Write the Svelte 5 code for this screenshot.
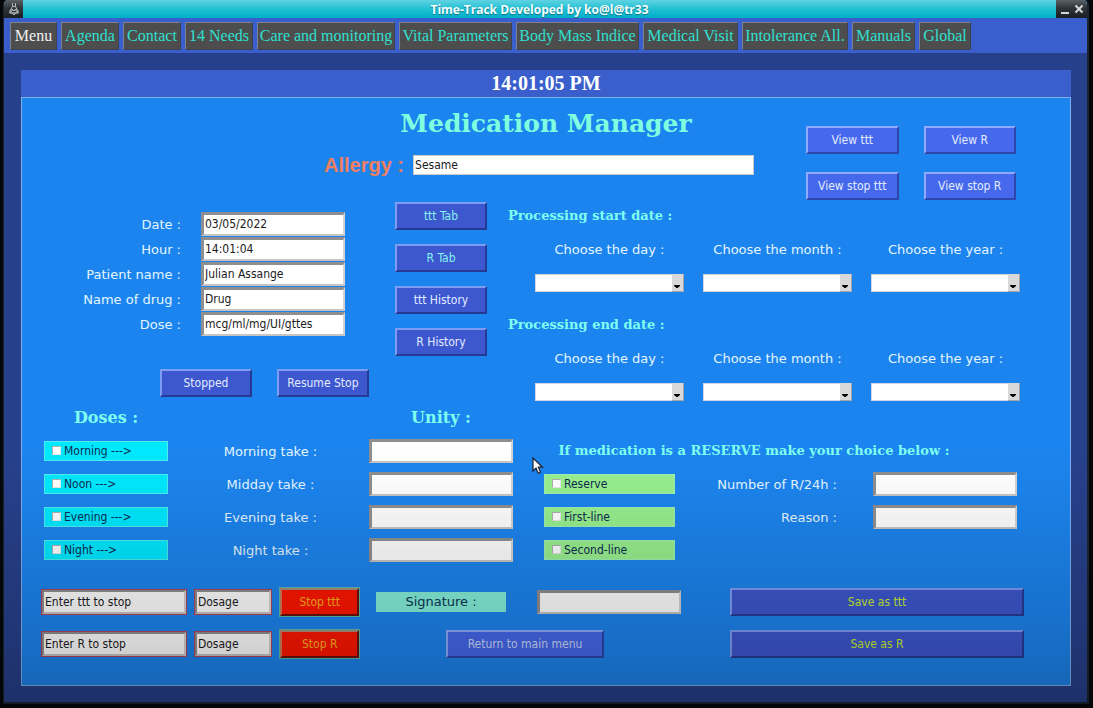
<script>
  const menu = [
    'Menu', 'Agenda', 'Contact', '14 Needs', 'Care and monitoring', 'Vital Parameters',
    'Body Mass Indice', 'Medical Visit', 'Intolerance All.', 'Manuals', 'Global'
  ];
  const views = ['View ttt', 'View R', 'View stop ttt', 'View stop R'];
  const fields = [
    { id: 'date', label: 'Date :', value: '03/05/2022' },
    { id: 'hour', label: 'Hour :', value: '14:01:04' },
    { id: 'patient', label: 'Patient name :', value: 'Julian Assange' },
    { id: 'drug', label: 'Name of drug :', value: 'Drug' },
    { id: 'dose', label: 'Dose :', value: 'mcg/ml/mg/UI/gttes' }
  ];
  const tabs = [
    { text: 'ttt Tab', aqua: true },
    { text: 'R Tab', aqua: true },
    { text: 'ttt History', aqua: false },
    { text: 'R History', aqua: false }
  ];
  const periods = ['start', 'end'];
  const units = ['day', 'month', 'year'];
  const takes = [
    { dose: 'Morning --->', label: 'Morning take :', line: '', extra: '' },
    { dose: 'Noon --->', label: 'Midday take :', line: 'Reserve', extra: 'Number of R/24h :' },
    { dose: 'Evening --->', label: 'Evening take :', line: 'First-line', extra: 'Reason :' },
    { dose: 'Night --->', label: 'Night take :', line: 'Second-line', extra: '' }
  ];
  const stops = ['ttt', 'R'];
</script>

<div class="screen">
  <div class="window">
    <header class="titlebar">
      <div class="badge">
        <svg width="14" height="14" viewBox="0 0 14 14" fill="none" stroke="#b4b8ba" aria-hidden="true">
          <path d="M5.500 1v3.500L4.200 7M8.500 1v3.500L9.800 7M5.500 4.500h3" />
          <path d="M4.200 7C3.200 8 2.600 9.400 2.600 11L5 11.200l2 1.600 2-1.600 2.400-.2C11.400 9.400 10.800 8 9.800 7L7 8.400z" fill="#8b9093" />
          <path d="M5 9.500h4" stroke="#33383b" />
        </svg>
      </div>
      <h1>Time-Track Developed by ko@l@tr33</h1>
      <div class="winbuttons">
        <button aria-label="Minimize">
          <svg width="10" height="12" viewBox="0 0 10 12"><path d="M1 10h8" stroke="#d4d8da" stroke-width="2" /></svg>
        </button>
        <button aria-label="Close">
          <svg width="10" height="12" viewBox="0 0 10 12"><path d="M1.500 2.500l7 7M8.500 2.500l-7 7" stroke="#d4d8da" stroke-width="2" /></svg>
        </button>
      </div>
    </header>

    <nav class="menubar">
      {#each menu as item, i}
        <button class:first={i === 0}>{item}</button>
      {/each}
    </nav>

    <main>
      <div class="clock">14:01:05 PM</div>

      <div class="panel">
        <section class="top">
          <div class="heading">
            <h2>Medication Manager</h2>
            <div class="allergy">
              <label for="allergy">Allergy :</label>
              <input id="allergy" value="Sesame" />
            </div>
          </div>
          <div class="views">
            {#each views as v}
              <button class="btn light">{v}</button>
            {/each}
          </div>
        </section>

        <section class="middle">
          <div class="patient">
            <div class="fields">
              {#each fields as f}
                <label for={f.id}>{f.label}</label>
                <input class="sunken" id={f.id} value={f.value} />
              {/each}
            </div>
            <div class="stopbuttons">
              <button class="btn">Stopped</button>
              <button class="btn">Resume Stop</button>
            </div>
          </div>

          <div class="tabs">
            {#each tabs as t}
              <button class="btn" class:aqua={t.aqua}>{t.text}</button>
            {/each}
          </div>

          <div class="periods">
            {#each periods as p}
              <div class="period">
                <h3>Processing {p} date :</h3>
                <div class="choices">
                  {#each units as u}
                    <div class="choice">
                      <label for="{p}-{u}">Choose the {u} :</label>
                      <div class="combo">
                        <select id="{p}-{u}"><option value=""></option></select>
                        <svg width="12" height="18" viewBox="0 0 12 18" aria-hidden="true">
                          <rect width="12" height="18" fill="#d9d9d9" />
                          <path d="M11.500 0v18M0 17.500h12" stroke="#a5a5a5" />
                          <path d="M2 11h6v1L5.500 14h-1L2 12z" fill="#000" />
                        </svg>
                      </div>
                    </div>
                  {/each}
                </div>
              </div>
            {/each}
          </div>
        </section>

        <section class="doses">
          <h3 class="h-doses">Doses :</h3>
          <h3 class="h-unity">Unity :</h3>
          {#each takes as t, i}
            <label class="check cyan">
              <input type="checkbox" /><span>{t.dose}</span>
            </label>
            <label class="take" for="take-{i}">{t.label}</label>
            <input class="sunken amount" id="take-{i}" />
            {#if i === 0}
              <h3 class="reserve">If medication is a RESERVE make your choice below :</h3>
            {:else}
              <label class="check green">
                <input type="checkbox" /><span>{t.line}</span>
              </label>
              {#if t.extra}
                <label class="extra" for="extra-{i}">{t.extra}</label>
                <input class="sunken extra-field" id="extra-{i}" />
              {/if}
            {/if}
          {/each}
        </section>

        <section class="bottom">
          <div class="stops">
            {#each stops as s}
              <input class="sunken red" aria-label="Treatment {s}" value="Enter {s} to stop" />
              <input class="sunken red" aria-label="Dosage {s}" value="Dosage" />
              <button class="btn stop">Stop {s}</button>
            {/each}
          </div>
          <div class="sign">
            <div class="signature">
              <label for="signature">Signature :</label>
              <input class="sunken" id="signature" />
            </div>
            <button class="btn light return">Return to main menu</button>
          </div>
          <div class="saves">
            <button class="btn save">Save as ttt</button>
            <button class="btn save">Save as R</button>
          </div>
        </section>
      </div>
    </main>
  </div>

  <svg class="pointer" width="12" height="18" viewBox="0 0 12 18" aria-hidden="true">
    <path d="M1 1v13l3-3 2.200 5.200 2.300-1L6.400 10.200H10.500z" fill="#fff" stroke="#1b2230" stroke-width="1.200" />
  </svg>
</div>

<style>
  :global(body) {
    margin: 0;
    background: #05080a;
  }

  .screen {
    position: relative;
    box-sizing: border-box;
    min-height: 100vh;
    display: flex;
    padding: 0 4px 4px 3px;
    background: #05080a;
    font-family: "DejaVu Sans", sans-serif;
    font-size: 13px;
  }

  .screen::after {
    content: "";
    position: absolute;
    inset: 0;
    pointer-events: none;
    background: linear-gradient(
      rgba(0, 0, 0, 0) 63%,
      rgba(0, 0, 0, 0.02) 68%,
      rgba(0, 0, 0, 0.09) 78%,
      rgba(0, 0, 0, 0.17) 91%,
      rgba(0, 0, 0, 0.26) 100%
    );
  }

  .window {
    flex: 1;
    min-width: 0;
    display: flex;
    flex-direction: column;
    border: solid #1b2532;
    border-width: 0 2px 2px 1px;
    border-radius: 5px 5px 0 0;
    overflow: hidden;
    background: #27408b;
  }

  .titlebar {
    display: flex;
    height: 18px;
    background: linear-gradient(#5fd3e2, #21c0d3 50%, #00b0c8);
  }

  .badge,
  .winbuttons {
    display: flex;
    align-items: center;
    justify-content: center;
    background: linear-gradient(#5a6065, #2f3439 45%, #1b1f23);
  }

  .badge {
    width: 19px;
  }

  .winbuttons {
    width: 31px;
    gap: 4px;
  }

  .winbuttons button {
    display: flex;
    padding: 0;
    border: 0;
    background: none;
  }

  h1 {
    flex: 1;
    margin: 0;
    text-align: center;
    font: bold 12px/20px "Open Sans", sans-serif;
    color: #f4ffff;
    text-shadow: 0 1px 1px #0b6f80;
  }

  .menubar {
    display: grid;
    grid-template-columns: 47fr 58fr 58fr 68fr 138fr 113fr 123fr 95fr 106fr 63fr 52fr 112fr;
    gap: 4px;
    padding: 4px 0 3px 6px;
    background: #3a5fcd;
  }

  .menubar button {
    height: 28px;
    padding: 0;
    border: 1px solid;
    border-color: #7d8194 #3c4250 #3c4250 #7d8194;
    background: #4d4d4d;
    color: #2fe0d0;
    font: 16px/24px "Liberation Serif", serif;
    white-space: nowrap;
  }

  .menubar .first {
    color: #f2f2f2;
  }

  main {
    padding: 17px 16px 16px 17px;
  }

  .clock {
    background: #3a5fcd;
    color: #fff;
    text-align: center;
    font: bold 20px/27px "Liberation Serif", serif;
  }

  .panel {
    border: 1px solid #7fb0ee;
    background: #1c84ee;
    padding-bottom: 27px;
  }

  h2 {
    margin: 0;
    padding-left: 14px;
    text-align: center;
    font: bold 25px/32px "DejaVu Serif", serif;
    color: #7fffe0;
    white-space: nowrap;
  }

  h3 {
    margin: 0;
    font: bold 13px/20px "DejaVu Serif", serif;
    color: #7ffff0;
    white-space: nowrap;
  }

  label {
    color: #e3f6ff;
    white-space: nowrap;
  }

  input,
  select {
    box-sizing: border-box;
    width: 100%;
    min-width: 0;
    margin: 0;
    border-radius: 0;
    background: #fff;
    color: #1a1a1a;
    font: 12px "DejaVu Sans Condensed", "DejaVu Sans", sans-serif;
  }

  .sunken {
    height: 24px;
    padding: 0 1px 1px;
    border: solid;
    border-width: 3px 2px 2px 3px;
    border-color: #8f8f8f #d6d2d0 #c8c4c2 #8f8f8f;
  }

  .btn {
    box-sizing: border-box;
    width: 100%;
    height: 28px;
    padding: 0 0 1px;
    border: 2px solid;
    border-color: #7f9cf5 #263a95 #263a95 #7f9cf5;
    background: #3d57cf;
    color: #e3ecff;
    font: 12px "DejaVu Sans Condensed", "DejaVu Sans", sans-serif;
    white-space: nowrap;
  }

  .light {
    background: #4568ec;
    border-color: #8fabff #2c46ab #2c46ab #8fabff;
  }

  .aqua {
    color: #86f3ee;
  }

  .top {
    display: grid;
    grid-template-columns: 302fr 430fr 52fr 210fr 54fr;
  }

  .heading {
    grid-column: 2;
    padding-top: 10px;
  }

  .allergy {
    display: flex;
    align-items: center;
    gap: 9px;
    padding-top: 15px;
  }

  .allergy label {
    font: bold 20px/20px "Liberation Sans", sans-serif;
    color: #f27f5f;
  }

  .allergy input {
    flex: 1;
    height: 20px;
    padding: 0 1px;
    border: 1px solid #c9c9c9;
  }

  .views {
    grid-column: 4;
    padding-top: 28px;
    display: grid;
    grid-template-columns: 1fr 1fr;
    gap: 18px 25px;
  }

  .middle {
    display: grid;
    grid-template-columns: 373fr 92fr 21fr 512fr 50fr;
    padding-top: 2px;
  }

  .fields {
    display: grid;
    grid-template-columns: 159fr 20fr 144fr 50fr;
    row-gap: 1px;
    align-items: center;
    padding-top: 10px;
  }

  .fields label {
    grid-column: 1;
    text-align: right;
  }

  .fields input {
    grid-column: 3;
  }

  .stopbuttons {
    display: grid;
    grid-template-columns: 92fr 92fr;
    gap: 25px;
    padding: 33px 7% 0 37%;
  }

  .tabs {
    display: flex;
    flex-direction: column;
    gap: 14px;
  }

  .periods {
    grid-column: 4;
    display: flex;
    flex-direction: column;
    gap: 23px;
    padding-top: 4px;
  }

  .choices {
    display: grid;
    grid-template-columns: repeat(3, 1fr);
    gap: 19px;
    padding: 14px 0 0 27px;
  }

  .choice {
    display: flex;
    flex-direction: column;
    gap: 14px;
    text-align: center;
    line-height: 20px;
  }

  .combo {
    display: grid;
  }

  .combo select,
  .combo svg {
    grid-area: 1 / 1;
  }

  .combo select {
    height: 18px;
    padding: 0;
    border: 1px solid #d2d6e0;
    appearance: none;
  }

  .combo svg {
    justify-self: end;
    pointer-events: none;
  }

  .doses {
    display: grid;
    grid-template-columns: 22fr 124fr 201fr 144fr 31fr 131fr 162fr 36fr 144fr 53fr;
    grid-auto-rows: 24px;
    row-gap: 9px;
    align-items: center;
    padding-top: 5px;
  }

  .doses .h-doses,
  .doses .h-unity {
    font-size: 16px;
    text-align: center;
  }

  .h-doses {
    grid-column: 2;
  }

  .h-unity {
    grid-column: 4;
  }

  .cyan {
    grid-column: 2;
    background: #00e8ff;
  }

  .take {
    grid-column: 3;
    padding-left: 4px;
    text-align: center;
  }

  .amount {
    grid-column: 4;
  }

  .reserve {
    grid-column: 6 / 10;
    padding-right: 53px;
    text-align: center;
  }

  .green {
    grid-column: 6;
    background: #98ef8e;
  }

  .extra {
    grid-column: 7;
    text-align: right;
  }

  .extra-field {
    grid-column: 9;
  }

  .check {
    box-sizing: border-box;
    display: flex;
    align-items: center;
    gap: 3px;
    height: 20px;
    padding: 0 0 1px 7px;
    border: 1px solid rgba(160, 240, 220, 0.5);
    color: #0b2b50;
    font: 12px "DejaVu Sans Condensed", "DejaVu Sans", sans-serif;
  }

  .check input {
    appearance: none;
    width: 9px;
    height: 9px;
    border: 1px solid;
    border-color: #b0b0b0 #e6e6e6 #e6e6e6 #b0b0b0;
  }

  .bottom {
    display: grid;
    grid-template-columns: 20fr 317fr 17fr 305fr 49fr 294fr 46fr;
    padding-top: 26px;
  }

  .stops,
  .saves,
  .sign {
    display: grid;
    row-gap: 14px;
    grid-auto-rows: 28px;
    align-items: center;
  }

  .stops {
    grid-column: 2;
    grid-template-columns: 143fr 76fr 78fr;
    column-gap: 9px;
  }

  .red {
    outline: 1px solid #b5435c;
    border-width: 2px;
  }

  .stop {
    outline: 1px solid #5fb9a8;
    border-color: #a8917f #6b1210 #6b1210 #d07a5c;
    background: #ff1600;
    color: #ffb020;
  }

  .sign {
    grid-column: 4;
  }

  .signature {
    display: grid;
    grid-template-columns: 130fr 144fr;
    gap: 31px;
    align-items: center;
  }

  .signature label {
    background: #84f0da;
    color: #0b3358;
    text-align: center;
    line-height: 20px;
  }

  .return {
    justify-self: center;
    width: 52%;
    margin-right: 7px;
    color: #ccd8ff;
  }

  .saves {
    grid-column: 6;
  }

  .save {
    color: #c8f02c;
  }

  .pointer {
    position: absolute;
    left: 532px;
    top: 457px;
  }
</style>
